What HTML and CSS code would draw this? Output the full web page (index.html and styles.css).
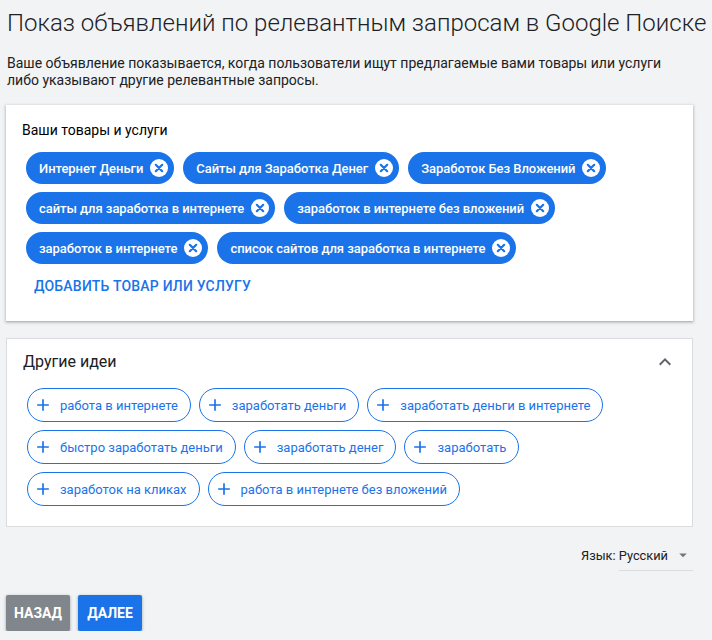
FILE: index.html
```html
<!DOCTYPE html>
<html lang="ru">
<head>
<meta charset="utf-8">
<title>Показ объявлений</title>
<link rel="stylesheet" href="styles.css">
</head>
<body>
<div class="page">
  <h1 class="title">Показ объявлений по релевантным запросам в Google Поиске</h1>
  <p class="subtitle">Ваше объявление показывается, когда пользователи ищут предлагаемые вами товары или услуги либо указывают другие релевантные запросы.</p>

  <section class="card card-main">
    <div class="card-label">Ваши товары и услуги</div>
    <div class="chips">
      <span class="chip">Интернет Деньги<svg class="x" viewBox="0 0 18 18"><circle cx="9" cy="9" r="9" fill="#fff"/><path d="M5.8 5.8L12.2 12.2M12.2 5.8L5.8 12.2" stroke="#1a73e8" stroke-width="2.2" stroke-linecap="round"/></svg></span>
      <span class="chip">Сайты для Заработка Денег<svg class="x" viewBox="0 0 18 18"><circle cx="9" cy="9" r="9" fill="#fff"/><path d="M5.8 5.8L12.2 12.2M12.2 5.8L5.8 12.2" stroke="#1a73e8" stroke-width="2.2" stroke-linecap="round"/></svg></span>
      <span class="chip">Заработок Без Вложений<svg class="x" viewBox="0 0 18 18"><circle cx="9" cy="9" r="9" fill="#fff"/><path d="M5.8 5.8L12.2 12.2M12.2 5.8L5.8 12.2" stroke="#1a73e8" stroke-width="2.2" stroke-linecap="round"/></svg></span>
      <span class="chip">сайты для заработка в интернете<svg class="x" viewBox="0 0 18 18"><circle cx="9" cy="9" r="9" fill="#fff"/><path d="M5.8 5.8L12.2 12.2M12.2 5.8L5.8 12.2" stroke="#1a73e8" stroke-width="2.2" stroke-linecap="round"/></svg></span>
      <span class="chip">заработок в интернете без вложений<svg class="x" viewBox="0 0 18 18"><circle cx="9" cy="9" r="9" fill="#fff"/><path d="M5.8 5.8L12.2 12.2M12.2 5.8L5.8 12.2" stroke="#1a73e8" stroke-width="2.2" stroke-linecap="round"/></svg></span>
      <span class="chip">заработок в интернете<svg class="x" viewBox="0 0 18 18"><circle cx="9" cy="9" r="9" fill="#fff"/><path d="M5.8 5.8L12.2 12.2M12.2 5.8L5.8 12.2" stroke="#1a73e8" stroke-width="2.2" stroke-linecap="round"/></svg></span>
      <span class="chip">список сайтов для заработка в интернете<svg class="x" viewBox="0 0 18 18"><circle cx="9" cy="9" r="9" fill="#fff"/><path d="M5.8 5.8L12.2 12.2M12.2 5.8L5.8 12.2" stroke="#1a73e8" stroke-width="2.2" stroke-linecap="round"/></svg></span>
    </div>
    <div class="add-wrap"><span class="text-btn">Добавить товар или услугу</span></div>
  </section>

  <section class="card card-ideas">
    <div class="ideas-head">
      <span class="ideas-title">Другие идеи</span>
      <svg class="chev" viewBox="0 0 24 24"><path d="M7.41 15.41L12 10.83l4.59 4.58L18 14l-6-6-6 6z" fill="#5f6368"/></svg>
    </div>
    <div class="chips ideas">
      <span class="ochip"><svg class="plus" viewBox="0 0 24 24"><path d="M19 13h-6v6h-2v-6H5v-2h6V5h2v6h6v2z" fill="#1a73e8"/></svg>работа в интернете</span>
      <span class="ochip"><svg class="plus" viewBox="0 0 24 24"><path d="M19 13h-6v6h-2v-6H5v-2h6V5h2v6h6v2z" fill="#1a73e8"/></svg>заработать деньги</span>
      <span class="ochip"><svg class="plus" viewBox="0 0 24 24"><path d="M19 13h-6v6h-2v-6H5v-2h6V5h2v6h6v2z" fill="#1a73e8"/></svg>заработать деньги в интернете</span>
      <span class="ochip"><svg class="plus" viewBox="0 0 24 24"><path d="M19 13h-6v6h-2v-6H5v-2h6V5h2v6h6v2z" fill="#1a73e8"/></svg>быстро заработать деньги</span>
      <span class="ochip"><svg class="plus" viewBox="0 0 24 24"><path d="M19 13h-6v6h-2v-6H5v-2h6V5h2v6h6v2z" fill="#1a73e8"/></svg>заработать денег</span>
      <span class="ochip"><svg class="plus" viewBox="0 0 24 24"><path d="M19 13h-6v6h-2v-6H5v-2h6V5h2v6h6v2z" fill="#1a73e8"/></svg>заработать</span>
      <span class="ochip"><svg class="plus" viewBox="0 0 24 24"><path d="M19 13h-6v6h-2v-6H5v-2h6V5h2v6h6v2z" fill="#1a73e8"/></svg>заработок на кликах</span>
      <span class="ochip"><svg class="plus" viewBox="0 0 24 24"><path d="M19 13h-6v6h-2v-6H5v-2h6V5h2v6h6v2z" fill="#1a73e8"/></svg>работа в интернете без вложений</span>
    </div>
  </section>

  <div class="lang-row">
    <div class="lang">
      <span>Язык: Русский</span>
      <svg class="drop" viewBox="0 0 24 24"><path d="M7 10l5 5 5-5z" fill="#757575"/></svg>
    </div>
  </div>

  <div class="actions">
    <button class="btn btn-back">Назад</button>
    <button class="btn btn-next">Далее</button>
  </div>
</div>
</body>
</html>
```

FILE: styles.css
```css
* { box-sizing: border-box; }
html, body {
  margin: 0;
  padding: 0;
  background: #f1f3f4;
  font-family: Roboto, "Noto Sans", Arial, sans-serif;
  color: #202124;
}
.page {
  width: 687px;
  margin-left: 6px;
  padding-top: 7px;
}
.title {
  margin: 0 0 0 1px;
  font-size: 24px;
  font-weight: 300;
  line-height: 32px;
  white-space: nowrap;
  color: #202124;
}
.subtitle {
  margin: 16px 0 0 1px;
  font-size: 14px;
  line-height: 17px;
  width: 680px;
}
.card {
  background: #fff;
}
.card-main {
  margin-top: 16px;
  padding: 15px 0 17px 16px;
  box-shadow: 0 1px 2px rgba(60,64,67,0.3), 0 1px 3px 1px rgba(60,64,67,0.15);
}
.card-label {
  font-size: 14px;
  line-height: 20px;
  font-weight: 400;
  color: #000;
}
.chips {
  display: flex;
  flex-wrap: wrap;
  gap: 8px 9px;
  padding-left: 4px;
  margin-top: 12px;
}
.chip {
  display: inline-flex;
  align-items: center;
  height: 32px;
  padding: 0 6px 0 13px;
  border-radius: 16px;
  background: #1a73e8;
  color: #fff;
  font-size: 13px;
  font-weight: 500;
  letter-spacing: -0.05px;
  white-space: nowrap;
}
.chip .x {
  width: 18px;
  height: 18px;
  margin-left: 7px;
}
.add-wrap {
  margin-top: 4px;
  padding-left: 4px;
}
.text-btn {
  display: inline-flex;
  align-items: center;
  height: 36px;
  padding: 0 8px;
  color: #1a73e8;
  font-size: 14px;
  font-weight: 500;
  text-transform: uppercase;
  letter-spacing: 0.2px;
}
.card-ideas {
  margin-top: 17px;
  border: 1px solid #dadce0;
  padding: 0 0 20px 0;
}
.ideas-head {
  display: flex;
  align-items: center;
  justify-content: space-between;
  height: 46px;
  padding: 0 15px 0 16px;
}
.ideas-title {
  font-size: 16px;
  line-height: 20px;
}
.chev {
  width: 24px;
  height: 24px;
}
.chips.ideas {
  margin-top: 3px;
  padding-left: 20px;
  gap: 8px 8px;
}
.ochip {
  display: inline-flex;
  align-items: center;
  height: 34px;
  padding: 0 12px 0 5px;
  border: 1px solid #1a73e8;
  border-radius: 17px;
  color: #1a73e8;
  font-size: 13px;
  white-space: nowrap;
}
.ochip .plus {
  width: 20px;
  height: 20px;
  margin-right: 7px;
}
.lang-row {
  display: flex;
  justify-content: flex-end;
  margin-top: 17px;
}
.lang {
  position: relative;
  display: flex;
  align-items: center;
  height: 26px;
  padding-bottom: 4px;
  font-size: 12.8px;
  color: #202124;
}
.lang::after {
  content: "";
  position: absolute;
  left: 38px;
  right: 0;
  bottom: -1px;
  height: 1px;
  background: #dadce0;
}
.drop {
  width: 18px;
  height: 18px;
  margin-left: 6px;
  margin-right: 1px;
}
.actions {
  display: flex;
  gap: 8px;
  margin-top: 25px;
}
.btn {
  height: 36px;
  min-width: 64px;
  padding: 0 8px;
  border: none;
  border-radius: 2px;
  color: #fff;
  font-family: Roboto, Arial, sans-serif;
  font-size: 14px;
  font-weight: 700;
  text-transform: uppercase;
  box-shadow: 0 1px 2px rgba(60,64,67,0.3), 0 1px 3px 1px rgba(60,64,67,0.15);
}
.btn-back { background: #80868b; }
.btn-next { background: #1a73e8; }
```
